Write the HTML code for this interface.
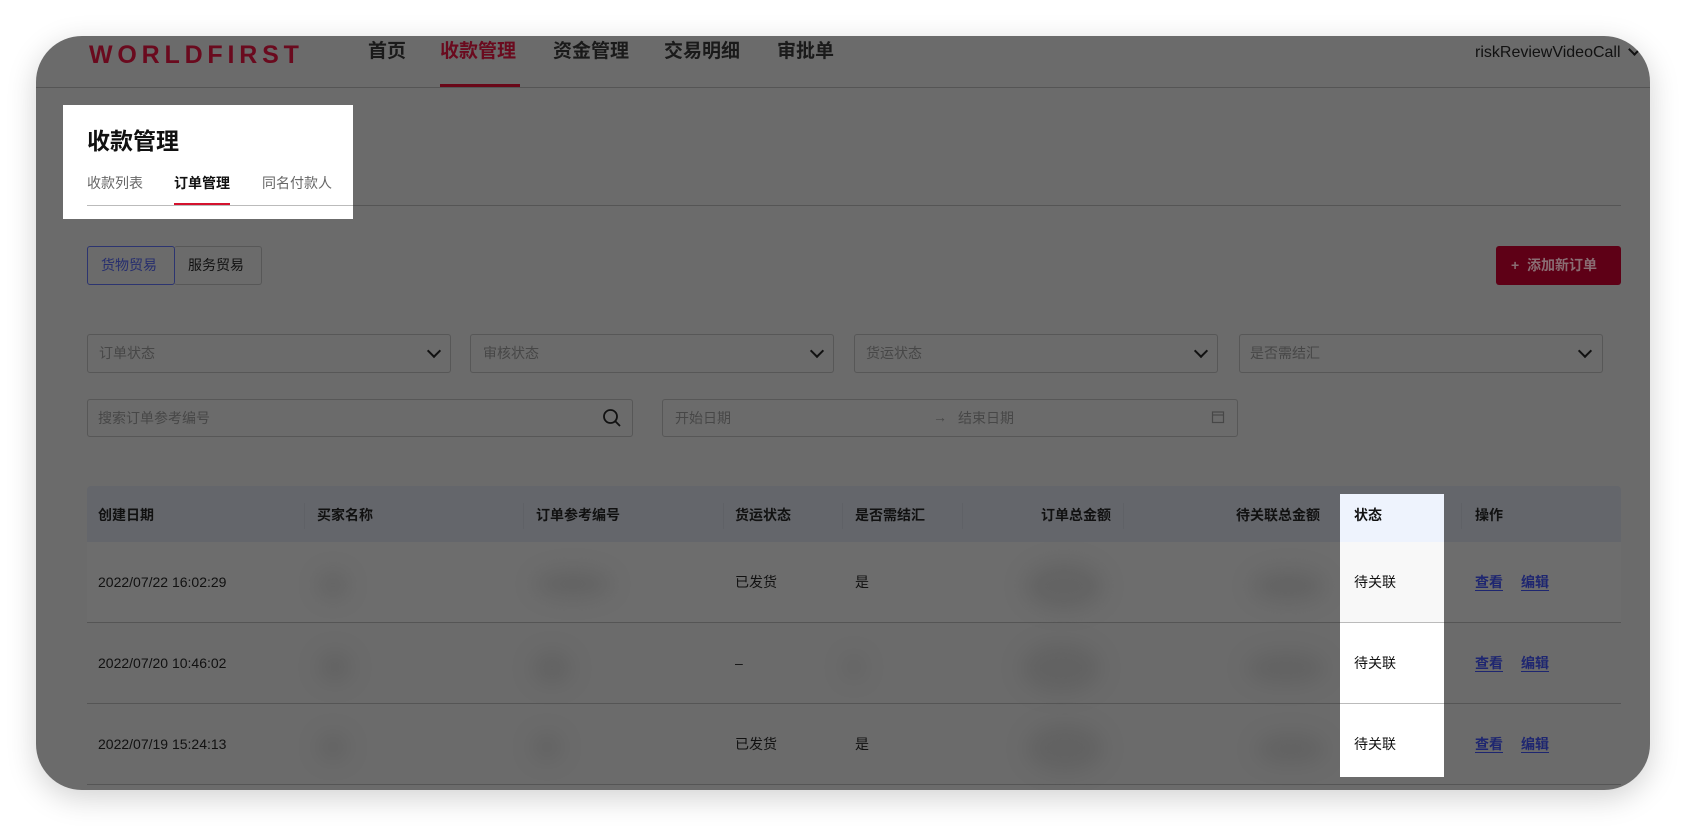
<!DOCTYPE html>
<html><head><meta charset="utf-8"><style>
*{margin:0;padding:0;box-sizing:border-box}
body{width:1686px;height:826px;background:#fff;position:relative;overflow:hidden;font-family:"Liberation Sans","Noto Sans CJK SC",sans-serif;color:#111}
.frame{position:absolute;left:36px;top:36px;width:1614px;height:754px;background:#6b6b6b;border-radius:46px;overflow:hidden;box-shadow:0 8px 30px rgba(0,0,0,.18)}
.a{position:absolute;white-space:nowrap}
.box{position:absolute;border:1px solid #575757;border-radius:3px}
.chev{position:absolute;width:10px;height:10px;border-right:2px solid #111;border-bottom:2px solid #111;transform:rotate(45deg)}
.blob{position:absolute;background:#555;filter:blur(10px);border-radius:50%;opacity:.4}
.hl{position:absolute;height:1px;background:#555}
.vd{position:absolute;width:1px;height:26px;background:#5f6166;top:17px}
.lk{color:#1e2670;text-decoration:underline;text-underline-offset:3px}
</style></head><body>
<div class="frame">
<div class="a" style="left:53px;top:3px;font-size:25px;letter-spacing:4.8px;color:#6a0a1e;font-weight:bold;line-height:32px">WORLDFIRST</div>
<div class="a" style="left:332px;top:4px;font-size:19px;font-weight:bold;color:#1a1a1a;line-height:24px">首页</div>
<div class="a" style="left:404px;top:4px;font-size:19px;font-weight:bold;color:#6a0a1e;line-height:24px">收款管理</div>
<div class="a" style="left:404px;top:48px;width:80px;height:3px;background:#6a0718"></div>
<div class="a" style="left:517px;top:4px;font-size:19px;font-weight:bold;color:#1a1a1a;line-height:24px">资金管理</div>
<div class="a" style="left:628px;top:4px;font-size:19px;font-weight:bold;color:#1a1a1a;line-height:24px">交易明细</div>
<div class="a" style="left:741px;top:4px;font-size:19px;font-weight:bold;color:#1a1a1a;line-height:24px">审批单</div>
<div class="a" style="left:1439px;top:7px;font-size:16px;color:#111;line-height:20px">riskReviewVideoCall</div>
<div class="chev" style="left:1594px;top:9px;width:9px;height:9px"></div>
<div class="a" style="left:0;top:51px;width:1614px;height:1px;background:#555"></div>
<div class="a" style="left:27px;top:69px;width:290px;height:114px;background:#fff"></div>
<div class="a" style="left:51px;top:91px;font-size:23px;font-weight:bold;color:#111;line-height:28px">收款管理</div>
<div class="a" style="left:51px;top:138px;font-size:14px;color:#666;line-height:18px">收款列表</div>
<div class="a" style="left:138px;top:138px;font-size:14px;font-weight:bold;color:#111;line-height:18px">订单管理</div>
<div class="a" style="left:226px;top:138px;font-size:14px;color:#666;line-height:18px">同名付款人</div>
<div class="a" style="left:51px;top:169px;width:1534px;height:1px;background:#555"></div>
<div class="a" style="left:51px;top:169px;width:266px;height:1px;background:#bbb"></div>
<div class="a" style="left:138px;top:167px;width:56px;height:2px;background:#d4122e"></div>
<div class="box" style="left:51px;top:210px;width:88px;height:39px;border-color:#2c3470"></div>
<div class="a" style="left:65px;top:220px;font-size:14px;color:#262e6e;line-height:18px">货物贸易</div>
<div class="box" style="left:138px;top:210px;width:88px;height:39px;border-left:none"></div>
<div class="a" style="left:152px;top:220px;font-size:14px;color:#111;line-height:18px">服务贸易</div>
<div class="a" style="left:1460px;top:210px;width:125px;height:39px;background:#5e0016;border-radius:3px"></div>
<div class="a" style="left:1475px;top:219px;font-size:14px;font-weight:bold;color:#8a6d73;line-height:20px">+&nbsp; 添加新订单</div>
<div class="box" style="left:51px;top:298px;width:364px;height:39px"></div>
<div class="a" style="left:63px;top:308px;font-size:14px;color:#474747;line-height:18px">订单状态</div>
<div class="chev" style="left:393px;top:310px"></div>
<div class="box" style="left:434px;top:298px;width:364px;height:39px"></div>
<div class="a" style="left:447px;top:308px;font-size:14px;color:#474747;line-height:18px">审核状态</div>
<div class="chev" style="left:776px;top:310px"></div>
<div class="box" style="left:818px;top:298px;width:364px;height:39px"></div>
<div class="a" style="left:830px;top:308px;font-size:14px;color:#474747;line-height:18px">货运状态</div>
<div class="chev" style="left:1160px;top:310px"></div>
<div class="box" style="left:1203px;top:298px;width:364px;height:39px"></div>
<div class="a" style="left:1214px;top:308px;font-size:14px;color:#474747;line-height:18px">是否需结汇</div>
<div class="chev" style="left:1544px;top:310px"></div>
<div class="box" style="left:51px;top:363px;width:546px;height:38px"></div>
<div class="a" style="left:62px;top:373px;font-size:14px;color:#474747;line-height:18px">搜索订单参考编号</div>
<svg class="a" style="left:566px;top:372px" width="20" height="20" viewBox="0 0 20 20"><circle cx="8.5" cy="8.5" r="6.5" fill="none" stroke="#111" stroke-width="1.8"/><path d="M13.3 13.3L18 18" stroke="#111" stroke-width="1.8"/></svg>
<div class="box" style="left:626px;top:363px;width:576px;height:38px"></div>
<div class="a" style="left:639px;top:373px;font-size:14px;color:#474747;line-height:18px">开始日期</div>
<div class="a" style="left:897px;top:372px;font-size:14px;color:#474747;line-height:18px">→</div>
<div class="a" style="left:922px;top:373px;font-size:14px;color:#474747;line-height:18px">结束日期</div>
<svg class="a" style="left:1175px;top:374px" width="14" height="14" viewBox="0 0 14 14"><rect x="1.5" y="2" width="11" height="10.5" fill="none" stroke="#474747" stroke-width="1.2"/><path d="M1.5 5h11" stroke="#474747" stroke-width="1.2"/></svg>
<div class="a" style="left:51px;top:450px;width:1534px;height:56px;background:#64666b;border-radius:4px 4px 0 0"></div>
<div class="vd" style="left:268px;top:467px"></div>
<div class="vd" style="left:487px;top:467px"></div>
<div class="vd" style="left:687px;top:467px"></div>
<div class="vd" style="left:806px;top:467px"></div>
<div class="vd" style="left:926px;top:467px"></div>
<div class="vd" style="left:1087px;top:467px"></div>
<div class="vd" style="left:1425px;top:467px"></div>
<div class="a" style="left:62px;top:470px;font-size:14px;font-weight:bold;line-height:18px">创建日期</div>
<div class="a" style="left:281px;top:470px;font-size:14px;font-weight:bold;line-height:18px">买家名称</div>
<div class="a" style="left:500px;top:470px;font-size:14px;font-weight:bold;line-height:18px">订单参考编号</div>
<div class="a" style="left:699px;top:470px;font-size:14px;font-weight:bold;line-height:18px">货运状态</div>
<div class="a" style="left:819px;top:470px;font-size:14px;font-weight:bold;line-height:18px">是否需结汇</div>
<div class="a" style="left:1005px;top:470px;font-size:14px;font-weight:bold;line-height:18px">订单总金额</div>
<div class="a" style="left:1200px;top:470px;font-size:14px;font-weight:bold;line-height:18px">待关联总金额</div>
<div class="a" style="left:1439px;top:470px;font-size:14px;font-weight:bold;line-height:18px">操作</div>
<div class="a" style="left:51px;top:506px;width:1534px;height:80px;background:#6d6d6d"></div>
<div class="hl" style="left:51px;top:586px;width:1534px"></div>
<div class="hl" style="left:51px;top:667px;width:1534px"></div>
<div class="hl" style="left:51px;top:748px;width:1534px"></div>
<div class="blob" style="left:282px;top:535px;width:30px;height:28px"></div>
<div class="blob" style="left:498px;top:533px;width:78px;height:30px"></div>
<div class="blob" style="left:988px;top:525px;width:80px;height:50px"></div>
<div class="blob" style="left:1215px;top:533px;width:75px;height:34px"></div>
<div class="blob" style="left:282px;top:615px;width:34px;height:32px"></div>
<div class="blob" style="left:496px;top:615px;width:40px;height:34px"></div>
<div class="blob" style="left:808px;top:619px;width:20px;height:24px"></div>
<div class="blob" style="left:985px;top:606px;width:80px;height:52px"></div>
<div class="blob" style="left:1210px;top:615px;width:80px;height:34px"></div>
<div class="blob" style="left:282px;top:697px;width:30px;height:28px"></div>
<div class="blob" style="left:496px;top:697px;width:30px;height:28px"></div>
<div class="blob" style="left:990px;top:687px;width:78px;height:50px"></div>
<div class="blob" style="left:1220px;top:697px;width:70px;height:32px"></div>
<div class="a" style="left:62px;top:537px;font-size:14px;line-height:18px">2022/07/22 16:02:29</div>
<div class="a" style="left:62px;top:618px;font-size:14px;line-height:18px">2022/07/20 10:46:02</div>
<div class="a" style="left:62px;top:699px;font-size:14px;line-height:18px">2022/07/19 15:24:13</div>
<div class="a" style="left:699px;top:537px;font-size:14px;line-height:18px">已发货</div>
<div class="a" style="left:699px;top:618px;font-size:14px;line-height:18px">–</div>
<div class="a" style="left:699px;top:699px;font-size:14px;line-height:18px">已发货</div>
<div class="a" style="left:819px;top:537px;font-size:14px;line-height:18px">是</div>
<div class="a" style="left:819px;top:699px;font-size:14px;line-height:18px">是</div>
<div class="a" style="left:1304px;top:458px;width:104px;height:48px;background:#eef3fd"></div>
<div class="a" style="left:1304px;top:506px;width:104px;height:80px;background:#f8f8f8"></div>
<div class="a" style="left:1304px;top:587px;width:104px;height:80px;background:#fff"></div>
<div class="a" style="left:1304px;top:668px;width:104px;height:73px;background:#fff"></div>
<div class="a" style="left:1304px;top:586px;width:104px;height:1px;background:#bbb"></div>
<div class="a" style="left:1304px;top:667px;width:104px;height:1px;background:#bbb"></div>
<div class="a" style="left:1318px;top:470px;font-size:14px;font-weight:bold;line-height:18px">状态</div>
<div class="a" style="left:1318px;top:537px;font-size:14px;line-height:18px">待关联</div>
<div class="a" style="left:1318px;top:618px;font-size:14px;line-height:18px">待关联</div>
<div class="a" style="left:1318px;top:699px;font-size:14px;line-height:18px">待关联</div>
<div class="a lk" style="left:1439px;top:537px;font-size:14px;font-weight:bold;line-height:18px">查看</div>
<div class="a lk" style="left:1485px;top:537px;font-size:14px;font-weight:bold;line-height:18px">编辑</div>
<div class="a lk" style="left:1439px;top:618px;font-size:14px;font-weight:bold;line-height:18px">查看</div>
<div class="a lk" style="left:1485px;top:618px;font-size:14px;font-weight:bold;line-height:18px">编辑</div>
<div class="a lk" style="left:1439px;top:699px;font-size:14px;font-weight:bold;line-height:18px">查看</div>
<div class="a lk" style="left:1485px;top:699px;font-size:14px;font-weight:bold;line-height:18px">编辑</div>
</div>
</body></html>
